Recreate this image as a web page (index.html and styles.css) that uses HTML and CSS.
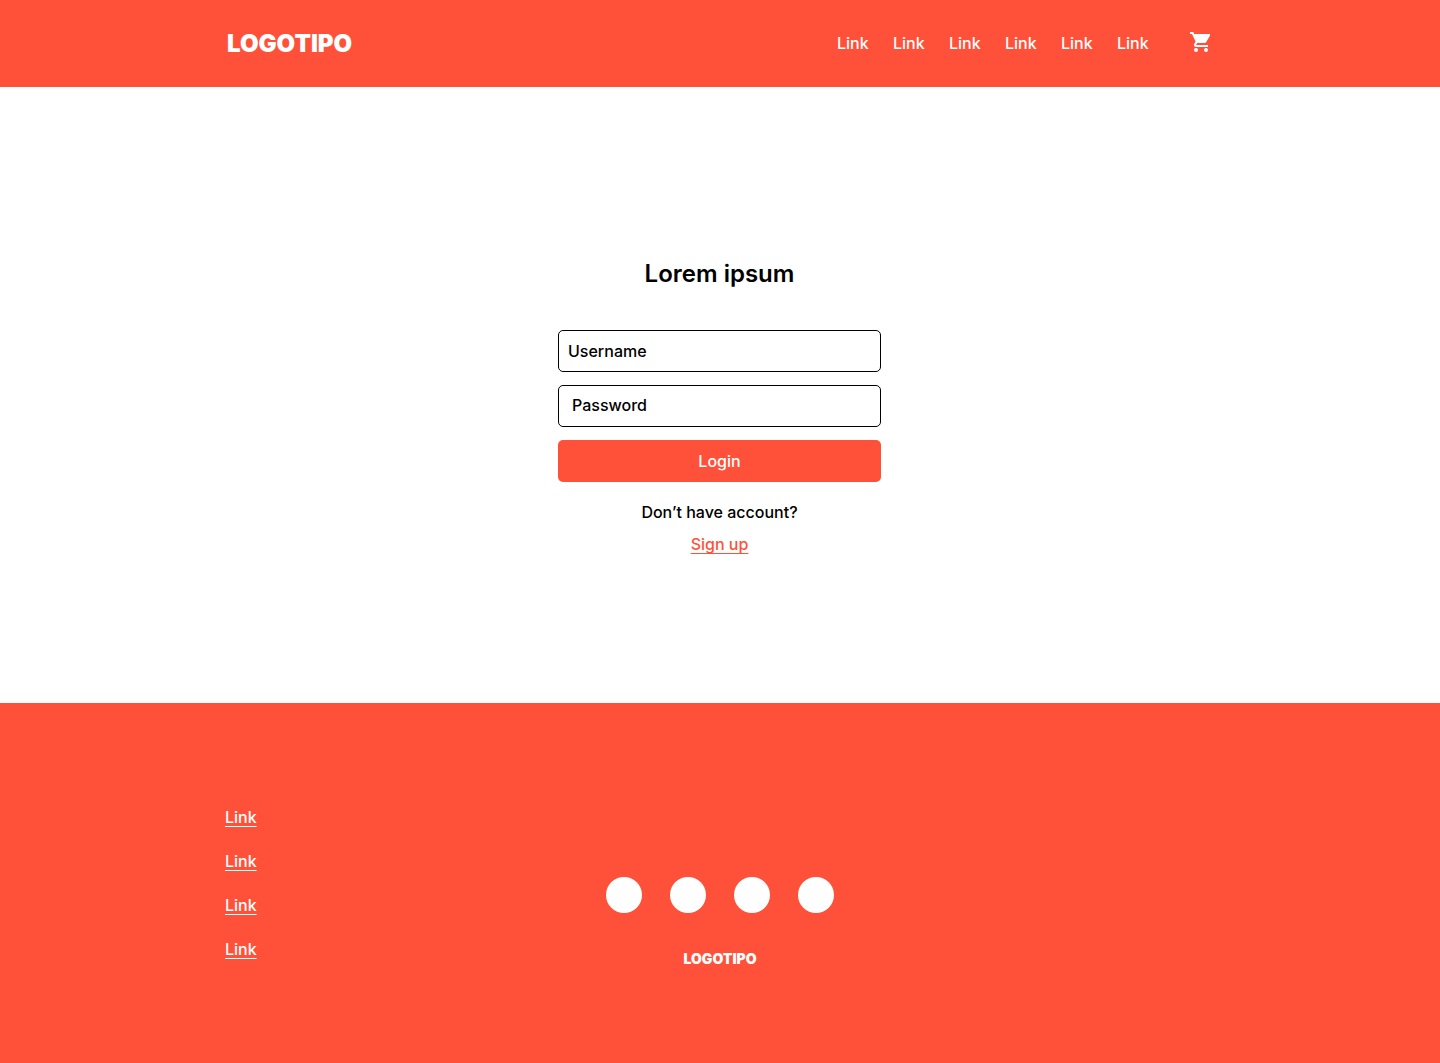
FILE: index.html
```html
<!DOCTYPE html>
<html lang="en">
<head>
<meta charset="utf-8">
<meta name="viewport" content="width=device-width, initial-scale=1">
<title>Login</title>
<link rel="stylesheet" href="styles.css">
</head>
<body>
<header class="header">
  <div class="container header-row">
    <a class="logo" href="#">LOGOTIPO</a>
    <nav class="nav" aria-label="Main">
      <a class="nav-link" href="#">Link</a>
      <a class="nav-link" href="#">Link</a>
      <a class="nav-link" href="#">Link</a>
      <a class="nav-link" href="#">Link</a>
      <a class="nav-link" href="#">Link</a>
      <a class="nav-link" href="#">Link</a>
      <a class="cart" href="#" aria-label="Cart">
        <svg viewBox="0 0 24 24" width="24" height="24" fill="currentColor" aria-hidden="true"><path d="M8 18a2 2 0 1 0 0 4 2 2 0 0 0 0-4zM2 2v2h2l3.600 7.590-1.350 2.450c-.160.280-.250.610-.250.960 0 1.100.900 2 2 2h12v-2H8.420c-.140 0-.250-.110-.250-.250l.030-.120.900-1.630h7.450c.750 0 1.410-.410 1.750-1.030L22 5.500V4H6.210l-.940-2H2zm16 16a2 2 0 1 0 0 4 2 2 0 0 0 0-4z"/></svg>
      </a>
    </nav>
  </div>
</header>
<main class="main">
  <form class="login">
    <h1 class="title">Lorem ipsum</h1>
    <input class="field" type="text" placeholder="Username" aria-label="Username">
    <input class="field field-password" type="password" placeholder="Password" aria-label="Password">
    <button class="submit" type="button">Login</button>
    <p class="hint">Don’t have account?</p>
    <a class="signup" href="#">Sign up</a>
  </form>
</main>
<footer class="footer">
  <div class="container footer-grid">
    <nav class="footer-links" aria-label="Footer">
      <a href="#">Link</a>
      <a href="#">Link</a>
      <a href="#">Link</a>
      <a href="#">Link</a>
    </nav>
    <div class="brand">
      <div class="social">
        <a href="#" aria-label="Social 1"></a>
        <a href="#" aria-label="Social 2"></a>
        <a href="#" aria-label="Social 3"></a>
        <a href="#" aria-label="Social 4"></a>
      </div>
      <a class="logo logo-small" href="#">LOGOTIPO</a>
    </div>
  </div>
</footer>
</body>
</html>
```
FILE: styles.css
```css
:root {
  --accent: #ff513a;
}

* {
  box-sizing: border-box;
}

body {
  display: flex;
  flex-direction: column;
  min-height: 100vh;
  margin: 0;
  background: #fff;
  color: #000;
  font: 500 16px/20px Inter, "Liberation Sans", sans-serif;
}

a {
  color: inherit;
  text-decoration: none;
}

.container {
  width: 100%;
  max-width: 1038px;
  margin: 0 auto;
  padding: 0 24px;
}

.header {
  padding: 28px 0 29px;
  background: var(--accent);
  color: #fff;
}

.header-row,
.nav {
  display: flex;
  align-items: center;
}

.header-row {
  flex-wrap: wrap;
  justify-content: space-between;
}

.logo {
  padding: 2px 0 0 2px;
  font-size: 24px;
  font-weight: 900;
  line-height: 28px;
}

.nav {
  gap: 24px;
}

.nav-link {
  min-width: 32px;
}

.cart {
  display: flex;
  margin-left: 15px;
  padding: 0 3px 2px 0;
}

.main {
  display: flex;
  flex: 1;
  justify-content: center;
  padding: 171px 25px 149px 24px;
}

.login {
  display: flex;
  flex-direction: column;
  align-items: center;
  width: 100%;
  max-width: 323px;
}

.title {
  margin: 0 0 40px;
  font-size: 24px;
  font-weight: 600;
  line-height: 32px;
}

.field,
.submit {
  width: 100%;
  height: 42px;
  margin: 0 0 13px;
  border: 1px solid #000;
  border-radius: 5px;
  font: inherit;
}

.field {
  padding: 0 9px;
  background: #fff;
  color: #000;
}

.field-password {
  padding: 0 9px 2px 13px;
}

.field::placeholder {
  color: #000;
  opacity: 1;
}

.submit {
  margin-bottom: 20px;
  border: 0;
  background: var(--accent);
  color: #fff;
}

.hint {
  margin: 0 0 12px;
}

.signup,
.footer-links a {
  text-decoration: underline;
  text-decoration-skip-ink: none;
  text-decoration-thickness: 1px;
  text-underline-offset: 3px;
}

.signup {
  color: var(--accent);
}

.footer {
  padding: 104px 0 94px;
  background: var(--accent);
  color: #fff;
}

.footer-grid {
  display: grid;
  grid-template-columns: 1fr auto 1fr;
}

.footer-links {
  display: flex;
  flex-direction: column;
  align-items: flex-start;
  gap: 24px;
}

.brand {
  display: flex;
  flex-direction: column;
  align-items: center;
  gap: 36px;
  padding-top: 70px;
}

.social {
  display: flex;
  gap: 28px;
}

.social a {
  width: 36px;
  height: 36px;
  border-radius: 50%;
  background: #fff;
}

.logo-small {
  padding: 0;
  font-size: 14px;
  line-height: 20px;
}
```
